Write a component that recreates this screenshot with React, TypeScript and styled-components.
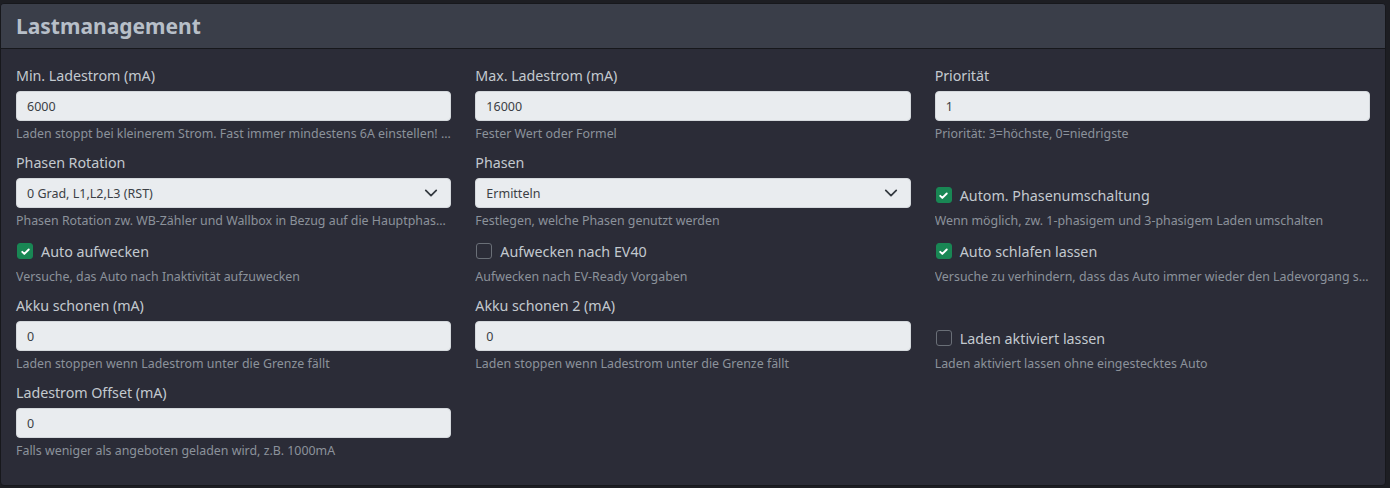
import React from 'react';
import styled, { createGlobalStyle } from 'styled-components';

const GlobalStyle = createGlobalStyle`
  html, body {
    margin: 0;
    padding: 0;
    background: #1d1e23;
  }
  body {
    font-family: "Noto Sans", "Open Sans", "Liberation Sans", sans-serif;
  }
  * { box-sizing: border-box; }
`;

const Page = styled.div`
  padding: 3px 4px 3px 0;
`;

const Card = styled.section`
  background: #2b2c37;
  border: 1px solid #17181c;
  border-radius: 4px;
  overflow: hidden;
`;

const CardHeader = styled.header`
  background: #3a3e49;
  border-bottom: 1px solid #17181c;
  height: 45px;
  display: flex;
  align-items: center;
  padding: 0 15px;
`;

const Title = styled.h2`
  margin: 0;
  font-size: 21px;
  font-weight: 700;
  color: #b7bfc8;
`;

const CardBody = styled.div`
  padding: 15px 15px 25px 15px;
  display: grid;
  grid-template-columns: repeat(3, 1fr);
  column-gap: 24px;
  row-gap: 8px;
  align-items: end;
`;

const Cell = styled.div`
  display: flex;
  flex-direction: column;
  min-width: 0;
`;

const Label = styled.label`
  font-size: 14.3px;
  line-height: 24px;
  color: #c3c9cf;
  margin-bottom: 3px;
  letter-spacing: -0.05px;
`;

const inputBox = `
  height: 30px;
  width: 100%;
  background: #e9ecef;
  border: 1px solid #d4d8dc;
  border-radius: 4px;
  padding: 0 10px;
  font-family: inherit;
  font-size: 12.5px;
  color: #3b3f45;
  display: flex;
  align-items: center;
`;

const TextInput = styled.div`
  ${inputBox}
`;

const Select = styled.div`
  ${inputBox}
  justify-content: space-between;
  padding-right: 12px;
`;

const Help = styled.div`
  margin-top: 3px;
  font-size: 12.4px;
  line-height: 19px;
  color: #8b929b;
  white-space: nowrap;
  overflow: hidden;
  text-overflow: ellipsis;
`;

const CheckRow = styled.label`
  display: flex;
  align-items: center;
  gap: 8px;
  height: 26px;
  font-size: 14.3px;
  color: #c3c9cf;
  padding-left: 1px;
`;

const Box = styled.span<{ $on: boolean }>`
  width: 16px;
  height: 16px;
  border-radius: 3px;
  flex: none;
  display: flex;
  align-items: center;
  justify-content: center;
  background: ${p => (p.$on ? '#198754' : '#2b2c37')};
  border: 1px solid ${p => (p.$on ? '#198754' : '#6a6f77')};
`;

const Chevron = () => (
  <svg width="14" height="14" viewBox="0 0 16 16" fill="none">
    <path d="m2 5 6 6 6-6" stroke="#343a40" strokeWidth="2" strokeLinecap="round" strokeLinejoin="round" />
  </svg>
);

const Check = () => (
  <svg width="13" height="13" viewBox="0 0 20 20" fill="none">
    <path d="M5 10.5l3.2 3.2L15 7" stroke="#fff" strokeWidth="3" strokeLinecap="round" strokeLinejoin="round" />
  </svg>
);

type FieldProps = { label: string; value: string; help: string; select?: boolean };

function Field({ label, value, help, select }: FieldProps) {
  return (
    <Cell>
      <Label>{label}</Label>
      {select ? (
        <Select>
          <span>{value}</span>
          <Chevron />
        </Select>
      ) : (
        <TextInput>{value}</TextInput>
      )}
      <Help>{help}</Help>
    </Cell>
  );
}

function CheckField({ label, help, on }: { label: string; help: string; on: boolean }) {
  return (
    <Cell>
      <CheckRow>
        <Box $on={on}>{on && <Check />}</Box>
        {label}
      </CheckRow>
      <Help>{help}</Help>
    </Cell>
  );
}

export default function App() {
  return (
    <>
      <GlobalStyle />
      <Page>
        <Card>
          <CardHeader>
            <Title>Lastmanagement</Title>
          </CardHeader>
          <CardBody>
            <Field
              label="Min. Ladestrom (mA)"
              value="6000"
              help="Laden stoppt bei kleinerem Strom. Fast immer mindestens 6A einstellen! Manche Fahrzeuge laden sonst nicht"
            />
            <Field label="Max. Ladestrom (mA)" value="16000" help="Fester Wert oder Formel" />
            <Field label="Priorität" value="1" help="Priorität: 3=höchste, 0=niedrigste" />

            <Field
              label="Phasen Rotation"
              value="0 Grad, L1,L2,L3 (RST)"
              select
              help="Phasen Rotation zw. WB-Zähler und Wallbox in Bezug auf die Hauptphasen des Hauses"
            />
            <Field label="Phasen" value="Ermitteln" select help="Festlegen, welche Phasen genutzt werden" />
            <CheckField
              on
              label="Autom. Phasenumschaltung"
              help="Wenn möglich, zw. 1-phasigem und 3-phasigem Laden umschalten"
            />

            <CheckField on label="Auto aufwecken" help="Versuche, das Auto nach Inaktivität aufzuwecken" />
            <CheckField on={false} label="Aufwecken nach EV40" help="Aufwecken nach EV-Ready Vorgaben" />
            <CheckField
              on
              label="Auto schlafen lassen"
              help="Versuche zu verhindern, dass das Auto immer wieder den Ladevorgang startet"
            />

            <Field
              label="Akku schonen (mA)"
              value="0"
              help="Laden stoppen wenn Ladestrom unter die Grenze fällt"
            />
            <Field
              label="Akku schonen 2 (mA)"
              value="0"
              help="Laden stoppen wenn Ladestrom unter die Grenze fällt"
            />
            <CheckField
              on={false}
              label="Laden aktiviert lassen"
              help="Laden aktiviert lassen ohne eingestecktes Auto"
            />

            <Field
              label="Ladestrom Offset (mA)"
              value="0"
              help="Falls weniger als angeboten geladen wird, z.B. 1000mA"
            />
          </CardBody>
        </Card>
      </Page>
    </>
  );
}
